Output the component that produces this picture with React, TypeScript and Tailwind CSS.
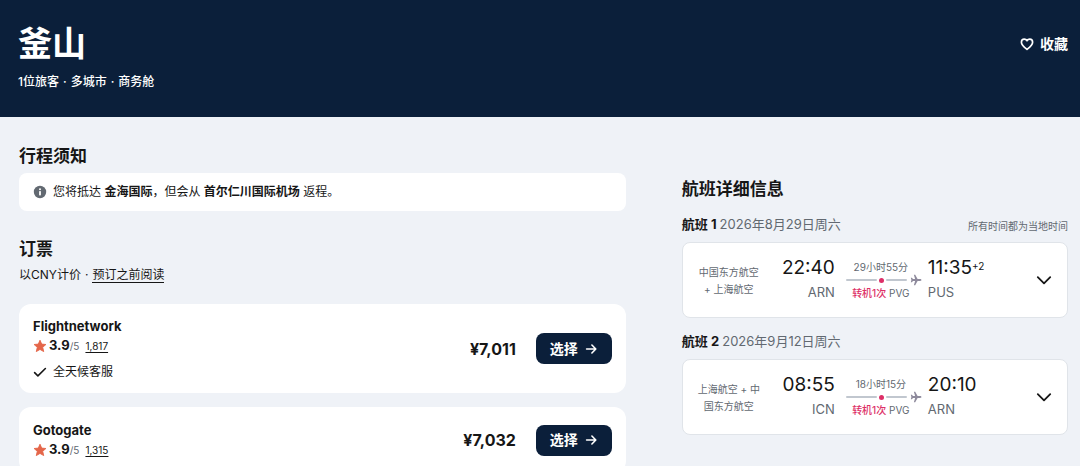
import React, { useState } from 'react';

interface Agent {
  name: string;
  rating: string;
  reviews: string;
  price: string;
  perks: string[];
}

interface Leg {
  label: string;
  date: string;
  airlines: string;
  departTime: string;
  departCode: string;
  arriveTime: string;
  arriveCode: string;
  dayOffset?: string;
  duration: string;
  stops: string;
  via: string;
}

const agents: Agent[] = [
  { name: 'Flightnetwork', rating: '3.9', reviews: '1,817', price: '¥7,011', perks: ['全天候客服'] },
  { name: 'Gotogate', rating: '3.9', reviews: '1,315', price: '¥7,032', perks: [] },
];

const legs: Leg[] = [
  {
    label: '航班 1',
    date: '2026年8月29日周六',
    airlines: '中国东方航空 + 上海航空',
    departTime: '22:40',
    departCode: 'ARN',
    arriveTime: '11:35',
    arriveCode: 'PUS',
    dayOffset: '+2',
    duration: '29小时55分',
    stops: '转机1次',
    via: 'PVG',
  },
  {
    label: '航班 2',
    date: '2026年9月12日周六',
    airlines: '上海航空 + 中国东方航空',
    departTime: '08:55',
    departCode: 'ICN',
    arriveTime: '20:10',
    arriveCode: 'ARN',
    duration: '18小时15分',
    stops: '转机1次',
    via: 'PVG',
  },
];

// --- Icons ---

const HeartIcon = () => (
  <svg viewBox="0 0 14 14" className="size-3.5" fill="none" stroke="currentColor" strokeWidth="1.7" strokeLinejoin="round" aria-hidden="true">
    <path d="M7 12.4C4.6 10.5 1.4 8.1 1.4 5.2c0-1.9 1.2-3.1 2.9-3.1 1.1 0 2.1.6 2.7 1.6.6-1 1.6-1.6 2.7-1.6 1.7 0 2.9 1.2 2.9 3.1 0 2.9-3.2 5.3-5.6 7.2z" />
  </svg>
);

const InfoIcon = () => (
  <svg viewBox="0 0 14 14" className="size-3.5 text-[#626971]" aria-hidden="true">
    <circle cx="7" cy="7" r="6.2" fill="currentColor" />
    <circle cx="7" cy="4.3" r="1" fill="#fff" />
    <rect x="6.1" y="6.1" width="1.8" height="4.4" rx="0.7" fill="#fff" />
  </svg>
);

const StarIcon = () => (
  <svg viewBox="0 0 14 14" className="size-3.5 text-[#e4664a]" fill="currentColor" stroke="currentColor" strokeWidth="0.9" strokeLinejoin="round" aria-hidden="true">
    <path d="M7 1.2l1.7 3.9 4.2.4-3.2 2.8 1 4.3L7 10.4l-3.7 2.2 1-4.3L1.1 5.5l4.2-.4z" />
  </svg>
);

const CheckIcon = () => (
  <svg viewBox="0 0 14 14" className="size-3.5" fill="none" stroke="currentColor" strokeWidth="1.6" strokeLinecap="round" strokeLinejoin="round" aria-hidden="true">
    <path d="M1.6 7.6l3.3 3.3 7.5-7.4" />
  </svg>
);

const ArrowIcon = () => (
  <svg viewBox="0 0 14 14" className="size-3.5" fill="none" stroke="currentColor" strokeWidth="1.6" strokeLinecap="round" strokeLinejoin="round" aria-hidden="true">
    <path d="M2.6 7h9M7.9 3L11.8 7l-3.9 4" />
  </svg>
);

const ChevronIcon = () => (
  <svg viewBox="0 0 18 18" className="size-4.5" fill="none" stroke="currentColor" strokeWidth="1.8" strokeLinecap="round" strokeLinejoin="round" aria-hidden="true">
    <path d="M2.8 6.2L9 12.4l6.2-6.2" />
  </svg>
);

const PlaneIcon = () => (
  <svg viewBox="0 0 12 12" className="size-3 shrink-0 text-[#8e8a9c]" fill="currentColor" aria-hidden="true">
    <path d="M11.4 6c0 .6-.6.9-1.3.9H7.6L5.2 11.3H3.9l1.2-4.4H3L1.9 8.3H.8L1.4 6 .8 3.7h1.1L3 5.1h2.1L3.9.7h1.3l2.4 4.4h2.5c.7 0 1.3.3 1.3.9z" />
  </svg>
);

const Dot = () => <span className="px-1">·</span>;

// --- Ticket sellers ---

const AgentCard: React.FC<{ agent: Agent }> = ({ agent }) => (
  <li className="flex min-h-[66px] items-center justify-between rounded-xl bg-white px-3.5 py-3">
    <div>
      <h3 className="text-[13px] leading-5 font-bold">{agent.name}</h3>
      <div className="flex h-5 items-center">
        <StarIcon />
        <span className="ml-0.5 text-[13px] font-bold">{agent.rating}</span>
        <span className="text-[10px] text-[#626971]">/5</span>
        <a href="#reviews" className="ml-1.5 text-[10px] underline underline-offset-2">
          {agent.reviews}
        </a>
      </div>
      {agent.perks.map((perk) => (
        <p key={perk} className="mt-[7px] flex items-center gap-1.5 text-xs leading-[18px]">
          <CheckIcon />
          {perk}
        </p>
      ))}
    </div>
    <div className="flex items-center gap-5">
      <span className="text-base font-bold">{agent.price}</span>
      <button type="button" className="flex h-[31px] items-center gap-1.5 rounded-lg bg-[#0b1f3a] px-3.5 text-sm font-bold text-white">
        选择
        <ArrowIcon />
      </button>
    </div>
  </li>
);

// --- Flight legs ---

const LegCard: React.FC<{ leg: Leg; note?: string }> = ({ leg, note }) => {
  const [open, setOpen] = useState(false);

  return (
    <div className="mt-[13px]">
      <div className="flex items-center justify-between">
        <h3 className="text-[13px] leading-5 font-bold">
          {leg.label} <span className="font-normal text-[#626971]">{leg.date}</span>
        </h3>
        {note && <span className="pt-1 text-[10px] leading-4 text-[#626971]">{note}</span>}
      </div>
      <div className="mt-2 flex items-center rounded-lg border border-[#e0e4e9] bg-white px-3.5 py-[13px]">
        <p className="w-16 pt-0.5 text-center text-[10px] leading-[17px] text-[#626971]">{leg.airlines}</p>
        <div className="w-[74px] text-right">
          <p className="text-[19px] leading-6">{leg.departTime}</p>
          <p className="text-[13px] leading-6 text-[#626971]">{leg.departCode}</p>
        </div>
        <div className="ml-[11px] w-[76px]">
          <p className="pr-1.5 text-center text-[10px] leading-[14px] text-[#626971]">{leg.duration}</p>
          <div className="flex h-3 items-center">
            <span className="h-0.5 w-[31px] rounded-full bg-[#c1c7cf]" />
            <span className="mx-0.5 size-[5px] rounded-full bg-[#dd2f67]" />
            <span className="mr-[3px] h-0.5 flex-1 rounded-full bg-[#c1c7cf]" />
            <PlaneIcon />
          </div>
          <p className="pr-1.5 text-center text-[10px] leading-[14px] whitespace-nowrap text-[#626971]">
            <span className="font-medium text-[#dd2f67]">{leg.stops}</span> {leg.via}
          </p>
        </div>
        <div className="ml-1.5">
          <p className="flex text-[19px] leading-6">
            {leg.arriveTime}
            {leg.dayOffset && <sup className="top-0 text-[10px] leading-5">{leg.dayOffset}</sup>}
          </p>
          <p className="text-[13px] leading-6 text-[#626971]">{leg.arriveCode}</p>
        </div>
        <button type="button" aria-label="展开航班" aria-expanded={open} onClick={() => setOpen(!open)} className="ml-auto">
          <ChevronIcon />
        </button>
      </div>
    </div>
  );
};

export default function App() {
  const [saved, setSaved] = useState(false);

  return (
    <div className="min-h-screen bg-[#eff2f7] font-[Inter,'Noto_Sans_CJK_SC',sans-serif] text-[#161616]" lang="zh-CN">
      <header className="flex items-start justify-between bg-[#0b1f3a] pt-6 pr-3 pb-[25px] pl-[18px] text-white">
        <div>
          <h1 className="text-[34px] leading-10 font-bold">釜山</h1>
          <p className="mt-2 text-xs leading-5 font-medium">
            1位旅客
            <Dot />
            多城市
            <Dot />
            商务舱
          </p>
        </div>
        <button type="button" aria-pressed={saved} onClick={() => setSaved(!saved)} className="flex h-10 items-center gap-1.5 text-sm font-bold">
          <HeartIcon />
          收藏
        </button>
      </header>

      <main className="grid grid-cols-[11fr_7fr] gap-14 pt-[27px] pr-3 pb-6 pl-[19px]">
        <div>
          <h2 className="text-[17px] leading-6 font-bold">行程须知</h2>
          <div className="mt-[5px] flex items-center gap-1.5 rounded-lg bg-white px-3.5 py-2.5 text-xs leading-[18px]">
            <InfoIcon />
            <p>
              您将抵达 <strong>金海国际</strong>，但会从 <strong>首尔仁川国际机场</strong> 返程。
            </p>
          </div>

          <h2 className="mt-[26px] text-[17px] leading-6 font-bold">订票</h2>
          <p className="mt-[5px] text-xs leading-[18px]">
            以CNY计价
            <Dot />
            <a href="#read-before-booking" className="border-b border-[#161616]">
              预订之前阅读
            </a>
          </p>
          <ul className="mt-5 flex flex-col gap-3.5">
            {agents.map((agent) => (
              <AgentCard key={agent.name} agent={agent} />
            ))}
          </ul>
        </div>

        <div className="pt-[33px]">
          <h2 className="text-[17px] leading-6 font-bold">航班详细信息</h2>
          <LegCard leg={legs[0]} note="所有时间都为当地时间" />
          <LegCard leg={legs[1]} />
        </div>
      </main>
    </div>
  );
}
